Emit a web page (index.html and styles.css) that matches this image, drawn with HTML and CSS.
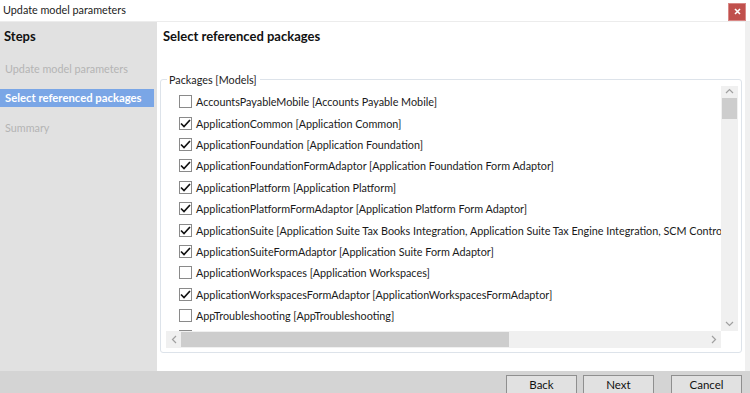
FILE: index.html
```html
<!DOCTYPE html>
<html>
<head>
<meta charset="utf-8">
<link rel="stylesheet" href="styles.css">
</head>
<body>
<div class="window">
  <div class="titlebar">
    <span class="title">Update model parameters</span>
    <div class="close"><svg width="7" height="7" viewBox="0 0 7 7"><path d="M1 1L6 6M6 1L1 6" stroke="#fff" stroke-width="1.6"/></svg></div>
  </div>
  <div class="body">
    <div class="steps">
      <div class="steps-title">Steps</div>
      <div class="step">Update model parameters</div>
      <div class="step active">Select referenced packages</div>
      <div class="step">Summary</div>
    </div>
    <div class="main">
      <div class="heading">Select referenced packages</div>
      <fieldset class="group">
        <legend>Packages [Models]</legend>
        <div class="listbox">
          <div class="viewport">
            <div class="list">
              <div class="row"><span class="cb"></span><span>AccountsPayableMobile [Accounts Payable Mobile]</span></div>
              <div class="row"><span class="cb on"><svg width="11" height="9" viewBox="0 0 11 9"><path d="M1 4.5L4 7.5L10 1" fill="none" stroke="#111" stroke-width="1.7"/></svg></span><span>ApplicationCommon [Application Common]</span></div>
              <div class="row"><span class="cb on"><svg width="11" height="9" viewBox="0 0 11 9"><path d="M1 4.5L4 7.5L10 1" fill="none" stroke="#111" stroke-width="1.7"/></svg></span><span>ApplicationFoundation [Application Foundation]</span></div>
              <div class="row"><span class="cb on"><svg width="11" height="9" viewBox="0 0 11 9"><path d="M1 4.5L4 7.5L10 1" fill="none" stroke="#111" stroke-width="1.7"/></svg></span><span>ApplicationFoundationFormAdaptor [Application Foundation Form Adaptor]</span></div>
              <div class="row"><span class="cb on"><svg width="11" height="9" viewBox="0 0 11 9"><path d="M1 4.5L4 7.5L10 1" fill="none" stroke="#111" stroke-width="1.7"/></svg></span><span>ApplicationPlatform [Application Platform]</span></div>
              <div class="row"><span class="cb on"><svg width="11" height="9" viewBox="0 0 11 9"><path d="M1 4.5L4 7.5L10 1" fill="none" stroke="#111" stroke-width="1.7"/></svg></span><span>ApplicationPlatformFormAdaptor [Application Platform Form Adaptor]</span></div>
              <div class="row"><span class="cb on"><svg width="11" height="9" viewBox="0 0 11 9"><path d="M1 4.5L4 7.5L10 1" fill="none" stroke="#111" stroke-width="1.7"/></svg></span><span>ApplicationSuite [Application Suite Tax Books Integration, Application Suite Tax Engine Integration, SCM Control Tower]</span></div>
              <div class="row"><span class="cb on"><svg width="11" height="9" viewBox="0 0 11 9"><path d="M1 4.5L4 7.5L10 1" fill="none" stroke="#111" stroke-width="1.7"/></svg></span><span>ApplicationSuiteFormAdaptor [Application Suite Form Adaptor]</span></div>
              <div class="row"><span class="cb"></span><span>ApplicationWorkspaces [Application Workspaces]</span></div>
              <div class="row"><span class="cb on"><svg width="11" height="9" viewBox="0 0 11 9"><path d="M1 4.5L4 7.5L10 1" fill="none" stroke="#111" stroke-width="1.7"/></svg></span><span>ApplicationWorkspacesFormAdaptor [ApplicationWorkspacesFormAdaptor]</span></div>
              <div class="row"><span class="cb"></span><span>AppTroubleshooting [AppTroubleshooting]</span></div>
              <div class="row"><span class="cb"></span><span>AppTroubleshootingCore [AppTroubleshootingCore]</span></div>
            </div>
            <div class="vscroll">
              <div class="arrow"><svg width="9" height="6" viewBox="0 0 9 6"><path d="M1 5L4.5 1.5L8 5" fill="none" stroke="#a0a0a0" stroke-width="1.2"/></svg></div>
              <div class="vthumb"></div>
              <div class="vtrack"></div>
              <div class="arrow"><svg width="9" height="6" viewBox="0 0 9 6"><path d="M1 1L4.5 4.5L8 1" fill="none" stroke="#a0a0a0" stroke-width="1.2"/></svg></div>
            </div>
          </div>
          <div class="hscroll">
            <div class="harrow"><svg width="6" height="9" viewBox="0 0 6 9"><path d="M5 1L1.5 4.5L5 8" fill="none" stroke="#a0a0a0" stroke-width="1.2"/></svg></div>
            <div class="hthumb"></div>
            <div class="htrack"></div>
            <div class="harrow"><svg width="6" height="9" viewBox="0 0 6 9"><path d="M1 1L4.5 4.5L1 8" fill="none" stroke="#a0a0a0" stroke-width="1.2"/></svg></div>
            <div class="corner"></div>
          </div>
        </div>
      </fieldset>
    </div>
    <div class="edge"></div>
  </div>
  <div class="footer">
    <div class="btn">Back</div>
    <div class="btn">Next</div>
    <div class="btn cancel">Cancel</div>
  </div>
</div>
</body>
</html>
```
FILE: styles.css
```css
* { box-sizing: border-box; }
html, body { margin: 0; padding: 0; }
body {
  width: 750px;
  height: 393px;
  overflow: hidden;
  font-family: "Lato", "Noto Sans", sans-serif;
  font-size: 10.8px;
  color: #1a1a1a;
  background: #fff;
}
.window { width: 750px; height: 393px; display: flex; flex-direction: column; }
.titlebar {
  height: 22px;
  flex: none;
  display: flex;
  align-items: center;
  justify-content: space-between;
  padding: 0 4px 0 3px;
  border-bottom: 1px solid #ececec;
  background: #fff;
}
.title { font-size: 10.8px; color: #222; margin-top: -2px; }
.close {
  width: 18px; height: 18px;
  background: #c0504d;
  border: 1px solid #d98886;
  display: flex; align-items: center; justify-content: center;
  margin-top: 2px;
}
.body { flex: 1; display: flex; min-height: 0; }
.steps { width: 157px; flex: none; background: #e1e1e1; padding-top: 6px; }
.steps-title { font-weight: bold; font-size: 13px; padding-left: 4px; height: 18px; color: #111; }
.step { color: #b4b4b4; height: 18px; line-height: 18px; padding-left: 5px; margin-top: 12px; white-space: nowrap; }
.step.active { background: #7aa6e6; color: #fff; font-weight: bold; width: 154px; margin-top: 11px; font-size: 11.3px; }
.step:nth-child(2) { margin-top: 14px; }
.main { flex: 1; min-width: 0; display: flex; flex-direction: column; padding: 6px 3px 18px 3px; background: #fff; }
.heading { font-weight: bold; font-size: 13px; padding-left: 3px; height: 18px; color: #111; }
.group {
  flex: 1;
  margin: 27px 0 0 0;
  padding: 2px 3px 4px 5px;
  border: 1px solid #dde3ea;
  border-radius: 3px;
  min-height: 0;
  min-width: 0;
  display: flex;
}
legend { padding: 0 3px 0 2px; margin-left: 1px; color: #222; font-size: 10.8px; }
.listbox { flex: 1; display: flex; flex-direction: column; min-width: 0; min-height: 0; margin-top: -2px; }
.viewport { flex: 1; display: flex; min-height: 0; overflow: hidden; }
.list { flex: 1; overflow: hidden; padding-left: 13px; padding-top: 5px; min-width: 0; }
.row { height: 21.4px; display: flex; align-items: center; white-space: nowrap; }
.cb {
  width: 13px; height: 13px;
  border: 1px solid #8a8a8a;
  background: #fff;
  margin-right: 4px;
  flex: none;
  display: flex; align-items: center; justify-content: center;
}
.vscroll { width: 17px; flex: none; background: #f0f0f0; display: flex; flex-direction: column; margin-top: -3px; }
.arrow { height: 15px; display: flex; align-items: center; justify-content: center; }
.vthumb { height: 21px; background: #cdcdcd; margin: 0 1px; }
.vtrack { flex: 1; }
.hscroll { height: 17px; flex: none; display: flex; background: #f0f0f0; }
.harrow { width: 15px; display: flex; align-items: center; justify-content: center; }
.hthumb { width: 328px; background: #cdcdcd; margin: 1px 0; }
.htrack { flex: 1; }
.corner { width: 17px; background: #fff; }
.edge { width: 5px; flex: none; background: #f0f0f0; }
.footer {
  height: 22px;
  flex: none;
  background: #d4d4d4;
  display: flex;
  justify-content: flex-end;
  padding: 4px 8px 0 0;
  gap: 6px;
}
.btn {
  width: 71px; height: 22px;
  border: 1px solid #8f8f8f;
  background: #e1e1e1;
  text-align: center;
  line-height: 18px;
  font-size: 11.5px;
  color: #111;
}
.btn.cancel { margin-left: 11px; }
```
